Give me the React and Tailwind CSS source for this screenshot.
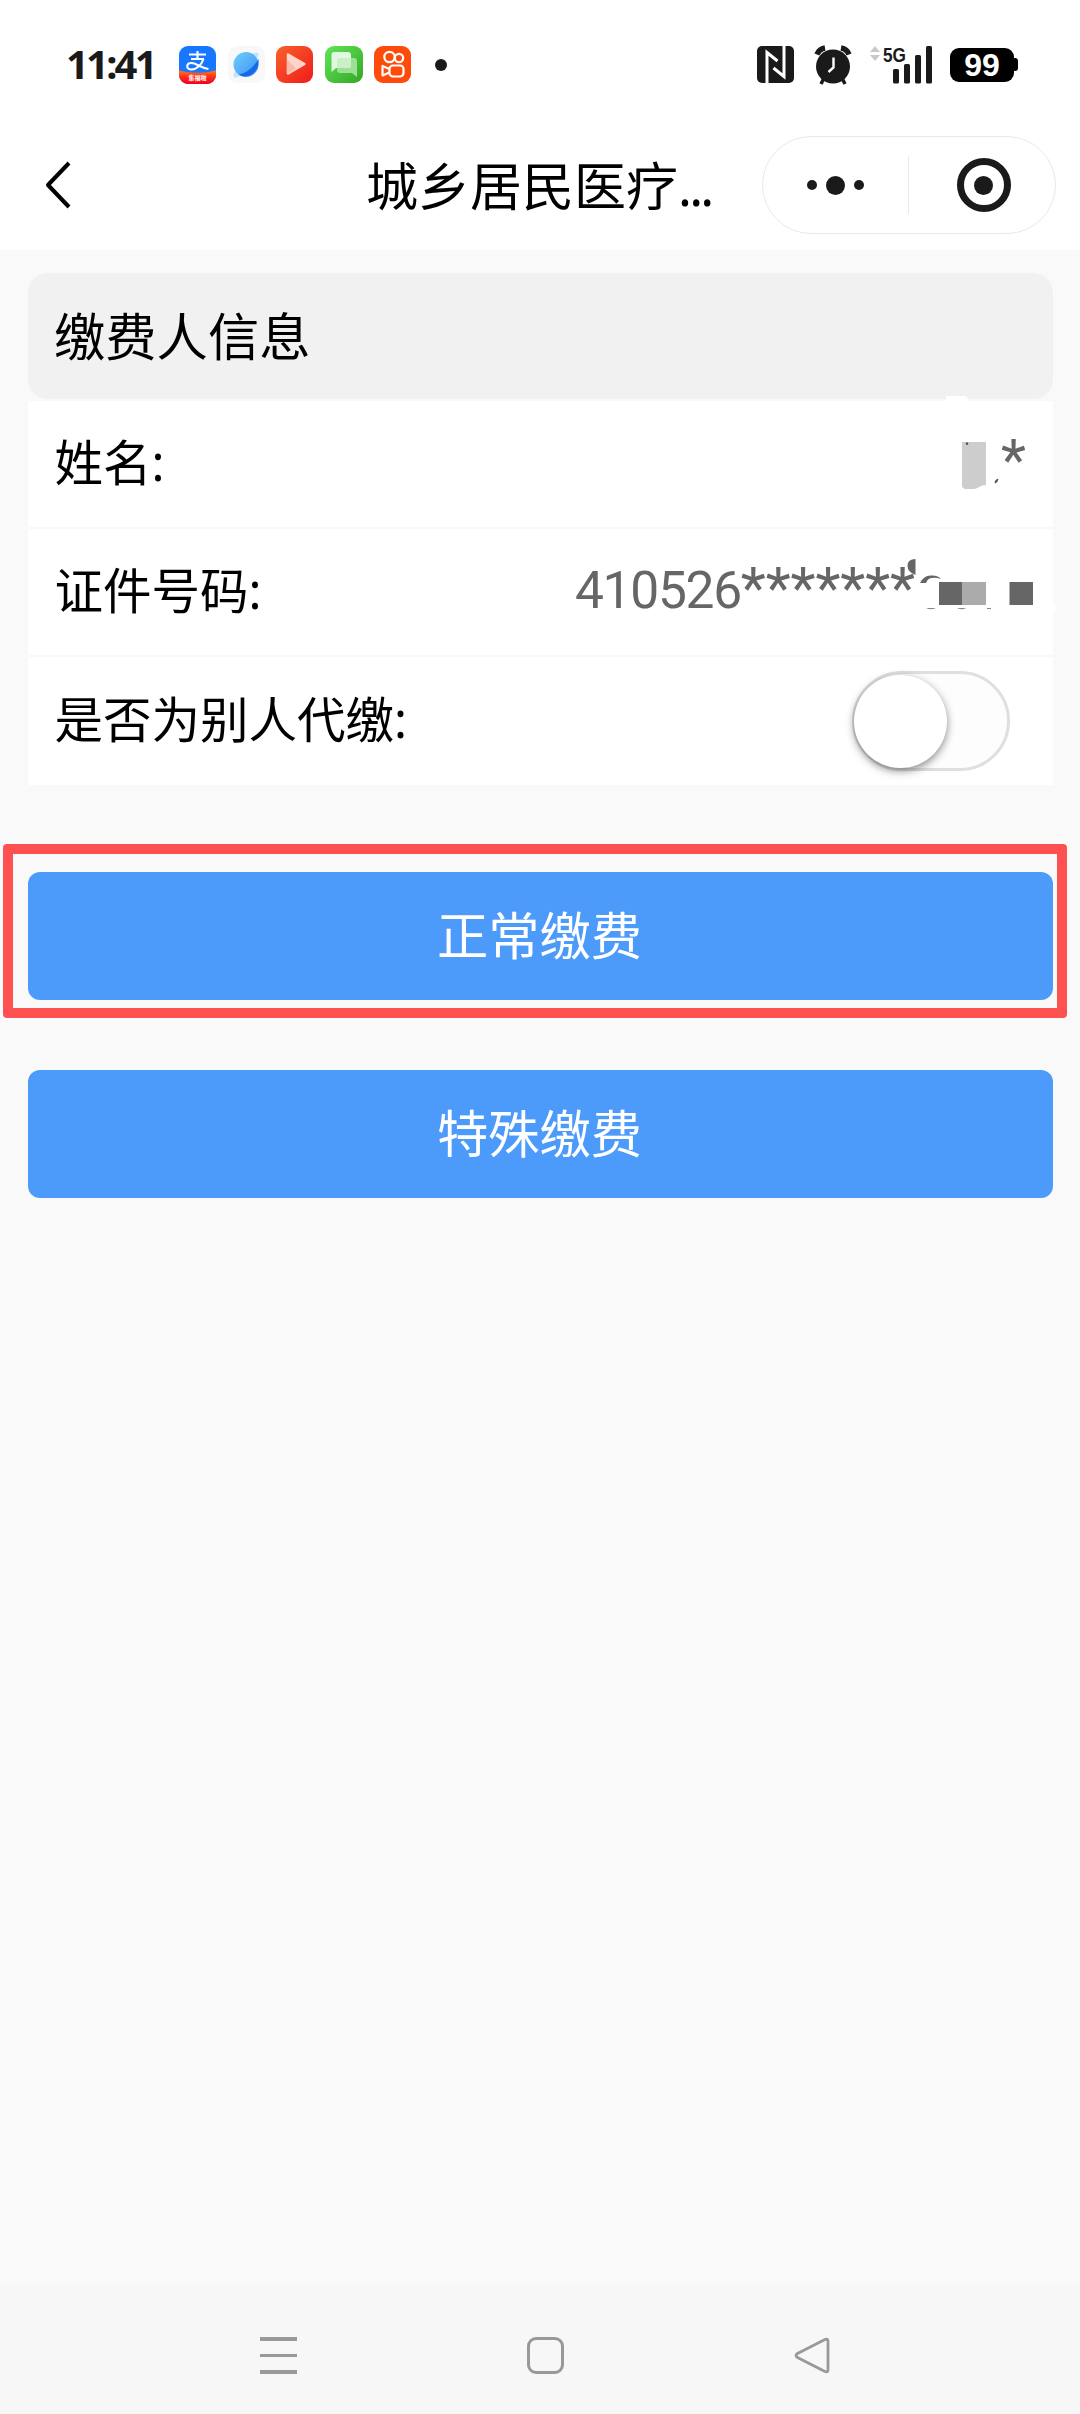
import React, { useState } from 'react';

/**
 * StatusBar Component
 * Time, running app icons, signal and battery
 */
const StatusBar = () => {
  return (
    <div className="flex h-[122px] items-start justify-between pt-[44px] pl-[66px] pr-[62px]">
      <div className="flex h-[41px] items-center">
        <span className="w-[113px] whitespace-nowrap pb-[2px] font-['Noto_Sans',sans-serif] text-[40px] leading-[41px] font-bold tracking-[-2.8px] text-[#1a1a1a]">
          11:41
        </span>
        <div className="flex items-center gap-[11.6px]">
          <PayIcon />
          <BrowserIcon />
          <VideoIcon />
          <MessageIcon />
          <CameraIcon />
        </div>
        <span className="ml-[24px] size-3 rounded-full bg-[#1a1a1a]" />
      </div>
      <div className="flex h-[41px] items-center">
        <NfcIcon />
        <AlarmIcon />
        <SignalIcon />
        <div className="ml-[18px] flex items-center">
          <span className="flex h-[34px] w-[64px] items-center justify-center rounded-[9px] bg-black font-['Liberation_Sans',sans-serif] text-[32px] leading-none font-bold text-white">
            99
          </span>
          <span className="h-[13px] w-[4px] rounded-r-[3px] bg-black" />
        </div>
      </div>
    </div>
  );
};

const PayIcon = () => (
  <svg width="37" height="38" viewBox="0 0 37 38">
    <defs>
      <clipPath id="payClip">
        <rect width="37" height="38" rx="9" />
      </clipPath>
      <linearGradient id="payRed" x1="0" y1="0" x2="0" y2="1">
        <stop offset="0" stopColor="#ff7a1a" />
        <stop offset="0.5" stopColor="#ff2a1a" />
        <stop offset="1" stopColor="#f5001c" />
      </linearGradient>
    </defs>
    <g clipPath="url(#payClip)">
      <rect width="37" height="38" fill="#1777ff" />
      <path d="M0 24.5Q18.5 29 37 24.5V38H0Z" fill="url(#payRed)" />
      <g fill="none" stroke="#fff" strokeWidth="2.1">
        <path d="M18.5 5v7" />
        <path d="M10 8.5h17M12 13h13" />
        <path d="M24.5 13c-2 6-7 10.500-12 10.500-6 0-5.500-6.500 0-6.500 5 0 8 4.500 17 6" />
      </g>
      <text x="18.500" y="34" fill="#fff" textAnchor="middle" fontSize="6" fontWeight="700" fontFamily="Noto Sans CJK SC, sans-serif">
        集福啦
      </text>
    </g>
  </svg>
);

const BrowserIcon = () => (
  <svg width="37" height="37" viewBox="0 0 37 37">
    <defs>
      <linearGradient id="planet" x1="0" y1="0" x2="1" y2="1">
        <stop offset="0" stopColor="#6fd0fb" />
        <stop offset="1" stopColor="#3b8df5" />
      </linearGradient>
    </defs>
    <rect width="37" height="37" rx="9" fill="#f8f8f8" />
    <ellipse cx="18" cy="19" rx="17" ry="5" transform="rotate(-45 18 19)" fill="#bfe6fd" />
    <circle cx="18" cy="18.500" r="12.500" fill="url(#planet)" />
    <path d="M30.500 13C26 21 18 28 10.500 28.500 19 34 32 27 30.500 13Z" fill="#1668e8" />
  </svg>
);

const VideoIcon = () => (
  <svg width="37" height="37" viewBox="0 0 37 37">
    <defs>
      <linearGradient id="videoBg" x1="0" y1="0" x2="1" y2="1">
        <stop offset="0" stopColor="#f8622b" />
        <stop offset="1" stopColor="#f01b1b" />
      </linearGradient>
    </defs>
    <rect width="37" height="37" rx="9" fill="url(#videoBg)" />
    <path d="M12 8.500 28.500 18 12 27.500Z" fill="#fdd5cb" stroke="#fdd5cb" strokeWidth="2.500" strokeLinejoin="round" />
    <path d="M11 13 20 22.500 12 27.500 10.800 27Z" fill="#fbb9a9" />
  </svg>
);

const MessageIcon = () => (
  <svg width="38" height="37" viewBox="0 0 38 37">
    <defs>
      <linearGradient id="msgBg" x1="0" y1="0" x2="1" y2="1">
        <stop offset="0" stopColor="#5fe458" />
        <stop offset="1" stopColor="#35a826" />
      </linearGradient>
    </defs>
    <rect width="38" height="37" rx="9" fill="url(#msgBg)" />
    <path d="M14 12h15q3 0 3 3v16l-5-4H15q-3 0-3-3V14Z" fill="#9be094" />
    <path d="M9 6h14q3 0 3 3v10q0 3-3 3H11l-4.500 4V8.500Q6.500 6 9 6Z" fill="#e3f8e1" />
    <path d="M12 14q0-2 2-2h12v7q0 3-3 3H12Z" fill="#cbf0c8" />
  </svg>
);

const CameraIcon = () => (
  <svg width="37" height="37" viewBox="0 0 37 37">
    <rect width="37" height="37" rx="9" fill="#ff4b0a" />
    <g fill="none" stroke="#fff" strokeWidth="2.200" strokeLinejoin="round">
      <circle cx="15.500" cy="11" r="5.200" />
      <circle cx="25" cy="12" r="4.200" />
      <rect x="15.500" y="19.500" width="14" height="11" rx="3.500" />
      <path d="M15.500 23 8.500 20v9.500l7-3" />
    </g>
  </svg>
);

const NfcIcon = () => (
  <svg width="37" height="37" viewBox="0 0 37 37">
    <rect width="37" height="37" rx="5" fill="#1a1a1a" />
    <path d="M10 37V6.500L20.500 15" fill="none" stroke="#fff" strokeWidth="3" />
    <path d="M27 0v30.500L16.500 22" fill="none" stroke="#fff" strokeWidth="3" />
  </svg>
);

const AlarmIcon = () => (
  <svg className="ml-[20px]" width="38" height="40" viewBox="0 0 38 40">
    <g fill="none" stroke="#1a1a1a">
      <path d="M3 9.500Q5 4 11 3" strokeWidth="5.500" />
      <path d="M35 9.500Q33 4 27 3" strokeWidth="5.500" />
      <path d="M10 33 7 39M28 33l3 6" strokeWidth="3.500" />
    </g>
    <circle cx="19" cy="21.500" r="17" fill="#1a1a1a" />
    <path d="M19.500 12.500v10L14.500 27" fill="none" stroke="#fff" strokeWidth="2.400" />
  </svg>
);

const SignalIcon = () => (
  <svg className="ml-[17px]" width="63" height="50" viewBox="0 -6 63 50">
    <path d="M6 0 11 6H1ZM6 15 1 9h10Z" fill="#c9c9c9" />
    <text x="14" y="15.500" fill="#1a1a1a" fontSize="21" fontWeight="700" textLength="23" lengthAdjust="spacingAndGlyphs" fontFamily="Liberation Sans, sans-serif">
      5G
    </text>
    <g fill="#1a1a1a">
      <rect x="24" y="23" width="6" height="14.500" rx="1.500" />
      <rect x="35" y="18" width="6" height="19.500" rx="1.500" />
      <rect x="46" y="9" width="6" height="28.500" rx="1.500" />
      <rect x="57" y="0" width="6" height="37.500" rx="1.500" />
    </g>
  </svg>
);

/**
 * TitleBar Component
 * Back button, page title and mini program capsule
 */
const TitleBar = () => {
  return (
    <header className="flex h-[128px] items-center pr-[24px] pb-[2px] pl-[44px]">
      <svg width="28" height="50" viewBox="0 0 28 50">
        <path d="M25 3 4 25l21 22" fill="none" stroke="#000" strokeWidth="4" strokeLinejoin="round" />
      </svg>
      <h1 className="ml-[294px] w-[396px] whitespace-nowrap text-[52px] leading-none text-black">
        城乡居民医疗
        <span className="font-['Noto_Sans',sans-serif] tracking-[-2.8px]">...</span>
      </h1>
      <div className="flex h-[98px] w-[294px] items-center rounded-[49px] border border-[#e9e9e9]">
        <div className="flex h-[58px] w-[146px] items-center justify-center gap-[9px] border-r border-[#e9e9e9]">
          <span className="size-[10px] rounded-full bg-[#1a1a1a]" />
          <span className="size-[19px] rounded-full bg-[#1a1a1a]" />
          <span className="size-[10px] rounded-full bg-[#1a1a1a]" />
        </div>
        <div className="flex flex-1 items-center justify-center pl-[3px]">
          <span className="flex size-[54px] items-center justify-center rounded-full border-[7px] border-[#1a1a1a]">
            <span className="size-[19px] rounded-full bg-[#1a1a1a]" />
          </span>
        </div>
      </div>
    </header>
  );
};

/**
 * InfoRow Component
 * Label on the left, value on the right
 */
const InfoRow = ({ label, children }) => {
  return (
    <div className="flex h-[126px] items-center justify-between bg-white pl-[26.5px] last-of-type:h-[128px]">
      <span className="pb-[5px] text-[48.5px] leading-none text-black">
        {label}
        <span className="font-['Noto_Sans',sans-serif]">:</span>
      </span>
      {children}
    </div>
  );
};

/**
 * Masks Component
 * Covers drawn over the private parts of the name and id number
 */
const Masks = () => (
  <svg className="absolute top-[-6px] right-[-5px]" width="200" height="230" viewBox="858 395 200 230">
    <path d="M946 402V396h19q3 1 4 6Z" fill="#fff" />
    <path d="M962 442h24v43q-4 0-7 2t-5 2h-9q-3-1-3-3Z" fill="#cdcdcd" />
    <path d="M966 443h2l-1 2ZM995 483q0-3 3-4-1 4-3 4Z" fill="#555" stroke="#555" />
    <path d="M915.500 559v16q-8-3-8-9 0-7 8-7Z" fill="#666" />
    <path d="M920 583q4-8 11-7.500 7-.500 10 3.500-6-2-9-1-4 0-6 5Z" fill="#666" />
    <path d="M926 608h10q-5 2.500-10 0ZM957 608h9q-4 2.500-9 0ZM987 608h4v1h-4Z" fill="#888" />
    <path d="M939 582h23v23h-23ZM1009.500 582h23.500v23h-23.500Z" fill="#666" />
    <path d="M962 582h24v23h-24Z" fill="#ababab" />
    <path d="M1053 602q6 6 0 12Z" fill="#fff" />
  </svg>
);

const Toggle = ({ checked, onChange }) => {
  return (
    <button
      type="button"
      role="switch"
      aria-checked={checked}
      onClick={onChange}
      className="mr-[43px] flex h-[100px] w-[158px] items-center rounded-full border-[3px] border-[#dfdfdf] bg-[#fdfdfd]"
    >
      <span
        className={`size-[93px] rounded-full bg-white shadow-[0_3px_8px_rgba(0,0,0,0.45)] ${checked ? 'ml-[60px]' : 'ml-[-1px]'}`}
      />
    </button>
  );
};

const PayButton = ({ children }) => {
  return (
    <button
      type="button"
      className="h-[128px] w-full rounded-[12px] bg-[#4c9bfa] pr-[2px] pb-[6px] text-[51.3px] leading-none text-white"
    >
      {children}
    </button>
  );
};

const NavBar = () => {
  return (
    <nav className="flex h-[128px] items-center justify-between bg-[#f7f7f7] pt-[11px] pr-[250px] pl-[260px]">
      <div className="flex w-[37px] flex-col gap-[13px]">
        <span className="h-[3.5px] bg-[#999]" />
        <span className="h-[3.5px] bg-[#999]" />
        <span className="h-[3.5px] bg-[#999]" />
      </div>
      <span className="h-[37px] w-[37px] rounded-[9px] border-[3px] border-[#999]" />
      <svg width="36" height="37" viewBox="0 0 36 37">
        <path
          d="M30.500 2.800Q34 1 34 4v29q0 3-3.500 1.200L3.500 20.500Q.500 18.500 3.500 16.500Z"
          fill="none"
          stroke="#999"
          strokeWidth="2.800"
        />
      </svg>
    </nav>
  );
};

const App = () => {
  const [forOthers, setForOthers] = useState(false);

  return (
    <div className="flex h-[2414px] w-[1080px] flex-col overflow-hidden bg-[#f9f9f9] font-['Noto_Sans_CJK_SC',sans-serif]">
      <div className="bg-white">
        <StatusBar />
        <TitleBar />
      </div>

      <main className="flex-1 pt-[23px] pr-[27px] pl-[28px]">
        <h2 className="flex h-[126px] items-center rounded-[20px] bg-[#f1f1f1] pb-[5px] pl-[26px] text-[51.3px] leading-none text-black">
          缴费人信息
        </h2>

        <div className="relative mt-[2px] flex flex-col gap-[2px]">
          <InfoRow label="姓名">
            <span className="mr-[27px] pb-[8px] font-['Roboto',sans-serif] text-[58px] leading-none text-[#666]">*</span>
          </InfoRow>
          <InfoRow label="证件号码">
            <span className="mr-[138px] flex items-center whitespace-nowrap font-['Roboto',sans-serif] leading-none text-[#666]">
              <span className="pb-[2px] text-[51.5px] tracking-[-1.3px]">410526</span>
              <span className="pb-[8px] text-[58px] tracking-[-0.1px]">*******</span>
            </span>
          </InfoRow>
          <InfoRow label="是否为别人代缴">
            <Toggle checked={forOthers} onChange={() => setForOthers(!forOthers)} />
          </InfoRow>
          <Masks />
        </div>

        <div className="mt-[59px] -mr-[14px] -ml-[25px] h-[174px] rounded-[4px] border-[10px] border-[#fc5150] pt-[18px] pr-[4px] pl-[15px]">
          <PayButton>正常缴费</PayButton>
        </div>
        <div className="mt-[52px]">
          <PayButton>特殊缴费</PayButton>
        </div>
      </main>

      <NavBar />
    </div>
  );
};

export default App;
